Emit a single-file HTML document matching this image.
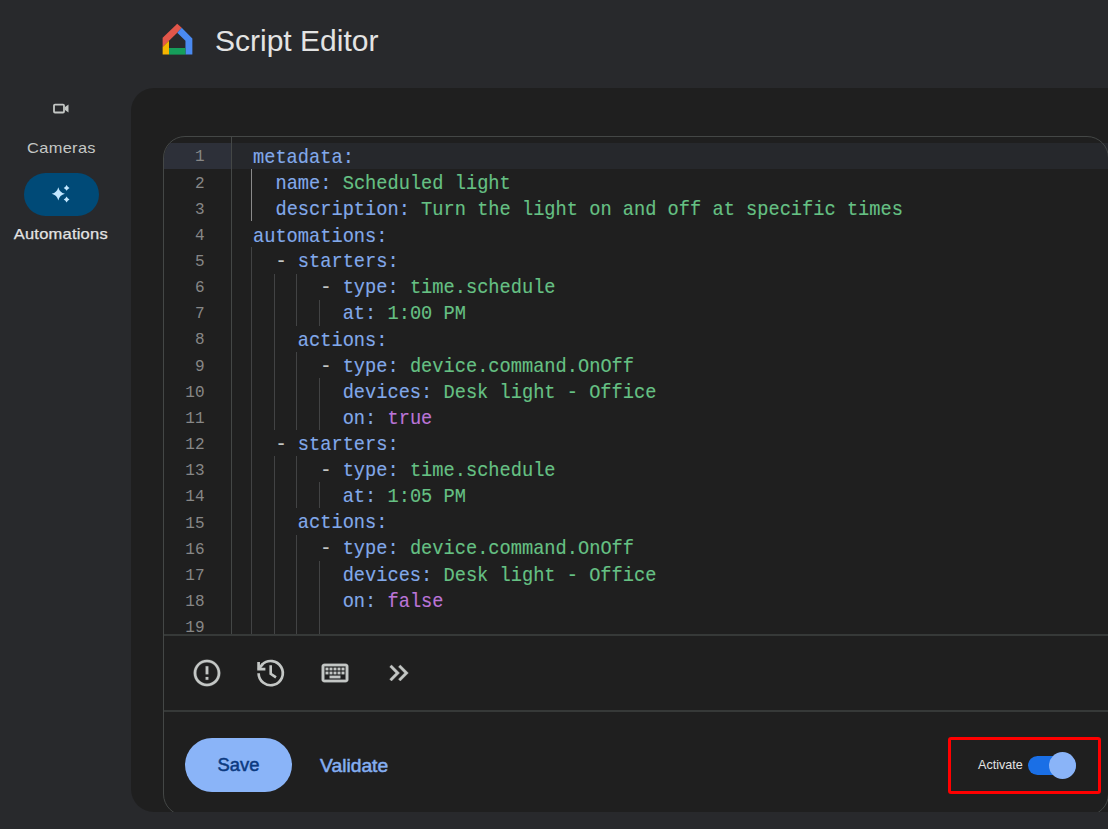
<!DOCTYPE html>
<html>
<head>
<meta charset="utf-8">
<style>
html,body{margin:0;padding:0;}
body{width:1108px;height:829px;overflow:hidden;background:#28292c;position:relative;font-family:"Liberation Sans",sans-serif;}
.abs{position:absolute;}
#title{left:215px;top:22.5px;font-size:30px;color:#e3e3e3;letter-spacing:0px;white-space:nowrap;line-height:36px;}
.navlbl{position:absolute;left:0;width:122px;text-align:center;font-size:14.5px;white-space:nowrap;}
#card,#card2{left:131px;top:88px;width:1100px;height:723.5px;background:#1f1f1f;border-radius:23px;overflow:hidden;}
#card2{background:transparent;}
.edbox{position:absolute;left:32px;top:48px;overflow:hidden;width:946px;height:680px;border:1px solid #444746;border-radius:22px;box-sizing:border-box;}
.code{font-family:"Liberation Mono",monospace;}
.gd{position:absolute;width:1px;background:#424344;}
.gd.hi{background:#8a8a8a;}
.k{color:#82a9ea;}
.v{color:#66c184;}
.b{color:#bb75d8;}
.d{color:#c4c7c5;}
</style>
</head>
<body>
<!-- Google Home logo -->
<svg class="abs" style="left:156px;top:18px" width="44" height="44" viewBox="0 0 829 829">
  <polygon fill="#e2564a" points="400,110 485,185 400,280 245,430 125,545 125,370"/>
  <polygon fill="#4a8af2" points="485,185 685,385 685,690 555,690 555,430 400,280"/>
  <polygon fill="#f4b400" points="125,545 245,430 245,690 125,690"/>
  <polygon fill="#169e5b" points="245,565 555,565 555,690 245,690"/>
</svg>
<div id="title" class="abs">Script Editor</div>

<!-- nav -->
<svg class="abs" style="left:45px;top:96px" width="32" height="24" viewBox="0 0 32 24">
  <rect x="9" y="8.6" width="10" height="7.9" rx="1" fill="none" stroke="#c4c7c5" stroke-width="1.8"/>
  <polygon points="20,11 23.5,8.4 23.5,16.5 20,14" fill="#c4c7c5"/>
</svg>
<div class="navlbl" style="top:140px;color:#c4c7c5;"><span style="display:inline-block;transform:scaleX(1.13);font-size:14.5px;letter-spacing:0.3px">Cameras</span></div>
<div class="abs" style="left:24px;top:173px;width:75px;height:43px;border-radius:22px;background:#004a77;"></div>
<div class="navlbl" style="top:224.5px;color:#e3e3e3;"><span style="display:inline-block;transform:scaleX(1.10);font-size:15px;letter-spacing:0.2px;-webkit-text-stroke:0.25px #e3e3e3">Automations</span></div>

<div id="card" class="abs">
  <div class="edbox" style="border-color:transparent"><div class="abs" style="left:0;top:6px;width:67px;height:26.1px;background:#2d3039;"></div></div>
</div>

<!-- editor content -->
<div class="abs" style="left:232px;top:143px;width:876px;height:26.1px;background:#26282c;"></div>


<div class="abs" style="left:231px;top:137px;width:1px;height:497.5px;background:#444746;"></div>
<div id="clip" class="abs" style="left:164px;top:137px;width:944px;height:497.5px;overflow:hidden;">
<div id="gutter" class="code" style="position:absolute;left:0;top:7.4px;width:40.5px;text-align:right;font-size:16px;line-height:26.15px;color:#878787;">
<div>1</div>
<div>2</div>
<div>3</div>
<div>4</div>
<div>5</div>
<div>6</div>
<div>7</div>
<div>8</div>
<div>9</div>
<div>10</div>
<div>11</div>
<div>12</div>
<div>13</div>
<div>14</div>
<div>15</div>
<div>16</div>
<div>17</div>
<div>18</div>
<div>19</div>
</div>
<div class="gd hi" style="left:87px;top:32.1px;height:52.2px"></div>
<div class="gd" style="left:87px;top:110.4px;height:387.1px"></div>
<div class="gd" style="left:110px;top:136.5px;height:156.6px"></div>
<div class="gd" style="left:110px;top:319.2px;height:178.3px"></div>
<div class="gd" style="left:132px;top:136.5px;height:52.2px"></div>
<div class="gd" style="left:132px;top:214.8px;height:78.3px"></div>
<div class="gd" style="left:132px;top:319.2px;height:52.2px"></div>
<div class="gd" style="left:132px;top:397.5px;height:100.0px"></div>
<div class="gd" style="left:155px;top:162.6px;height:26.1px"></div>
<div class="gd" style="left:155px;top:240.9px;height:52.2px"></div>
<div class="gd" style="left:155px;top:345.3px;height:26.1px"></div>
<div class="gd" style="left:155px;top:423.6px;height:73.9px"></div>
<div id="code" class="code" style="position:absolute;left:89px;top:7.6px;font-size:18.68px;line-height:24.857px;white-space:pre;transform:scaleY(1.05);transform-origin:0 0;-webkit-text-stroke:0.12px currentColor;"><div class="ln"><span class="k">metadata:</span></div><div class="ln">  <span class="k">name:</span> <span class="v">Scheduled light</span></div><div class="ln">  <span class="k">description:</span> <span class="v">Turn the light on and off at specific times</span></div><div class="ln"><span class="k">automations:</span></div><div class="ln">  <span class="d">- </span><span class="k">starters:</span></div><div class="ln">      <span class="d">- </span><span class="k">type:</span> <span class="v">time.schedule</span></div><div class="ln">        <span class="k">at:</span> <span class="v">1:00 PM</span></div><div class="ln">    <span class="k">actions:</span></div><div class="ln">      <span class="d">- </span><span class="k">type:</span> <span class="v">device.command.OnOff</span></div><div class="ln">        <span class="k">devices:</span> <span class="v">Desk light - Office</span></div><div class="ln">        <span class="k">on:</span> <span class="b">true</span></div><div class="ln">  <span class="d">- </span><span class="k">starters:</span></div><div class="ln">      <span class="d">- </span><span class="k">type:</span> <span class="v">time.schedule</span></div><div class="ln">        <span class="k">at:</span> <span class="v">1:05 PM</span></div><div class="ln">    <span class="k">actions:</span></div><div class="ln">      <span class="d">- </span><span class="k">type:</span> <span class="v">device.command.OnOff</span></div><div class="ln">        <span class="k">devices:</span> <span class="v">Desk light - Office</span></div><div class="ln">        <span class="k">on:</span> <span class="b">false</span></div><div class="ln"></div></div>
</div>
<div class="abs" style="left:164px;top:634px;width:944px;height:2px;background:#363938;"></div>
<div class="abs" style="left:164px;top:710px;width:944px;height:2px;background:#363938;"></div>

<!-- toolbar icons -->
<svg class="abs" style="left:190.9px;top:656.9px" width="32" height="32" viewBox="0 0 24 24"><path fill="#c4c7c5" stroke="#c4c7c5" stroke-width="0.15" d="M11 15h2v2h-2zm0-8h2v6h-2zm.99-5C6.47 2 2 6.48 2 12s4.47 10 9.99 10C17.52 22 22 17.52 22 12S17.52 2 11.99 2zM12 20c-4.42 0-8-3.58-8-8s3.58-8 8-8 8 3.58 8 8-3.58 8-8 8z"/></svg>
<svg class="abs" style="left:252px;top:655px" width="38" height="38" viewBox="252 655 38 38"><g fill="none" stroke="#c4c7c5" stroke-width="2.7"><path d="M258.6 673.2 A12.1 12.1 0 1 0 262.1 664.6"/><path d="M258.6 662 V669.2 H265.4" stroke-linejoin="miter"/><path d="M258.6 669.2 L262.6 664.2"/><path d="M270.7 665.2 V673.9 L276 677.3" stroke-width="2.6" stroke-linejoin="miter"/></g></svg>
<svg class="abs" style="left:318.7px;top:657px" width="32" height="32" viewBox="0 -960 960 960"><path fill="#c4c7c5" stroke="#c4c7c5" stroke-width="8" d="M160-200q-33 0-56.5-23.5T80-280v-400q0-33 23.5-56.5T160-760h640q33 0 56.5 23.5T880-680v400q0 33-23.5 56.5T800-200H160Zm0-80h640v-400H160v400Zm160-40h320v-80H320v80ZM200-440h80v-80h-80v80Zm120 0h80v-80h-80v80Zm120 0h80v-80h-80v80Zm120 0h80v-80h-80v80Zm120 0h80v-80h-80v80ZM200-560h80v-80h-80v80Zm120 0h80v-80h-80v80Zm120 0h80v-80h-80v80Zm120 0h80v-80h-80v80Zm120 0h80v-80h-80v80Z"/></svg>
<svg class="abs" style="left:382.5px;top:657px" width="32" height="32" viewBox="0 -960 960 960"><path fill="#c4c7c5" stroke="#c4c7c5" stroke-width="12" d="M383-480 200-664l56-56 240 240-240 240-56-56 183-184Zm264 0L464-664l56-56 240 240-240 240-56-56 183-184Z"/></svg>

<!-- footer -->
<div class="abs" style="left:185px;top:738px;width:107px;height:53.5px;border-radius:27px;background:#8ab4f8;"></div>
<div class="abs" style="left:185.5px;top:739px;width:107px;height:53.5px;line-height:53.5px;text-align:center;font-size:18px;color:#0c3a80;-webkit-text-stroke:0.5px #0c3a80;"><span style="display:inline-block;transform:scaleX(1.02)">Save</span></div>
<div class="abs" style="left:320px;top:753px;font-size:18px;color:#84aef2;line-height:26px;white-space:nowrap;-webkit-text-stroke:0.5px #84aef2;transform-origin:0 0;transform:scaleX(1.07)">Validate</div>

<div class="abs" style="left:948px;top:737px;width:153px;height:57px;border:3px solid #ff0000;border-radius:3px;box-sizing:border-box;"></div>
<div class="abs" style="left:978px;top:756.7px;font-size:12.6px;color:#e3e3e3;line-height:16px;white-space:nowrap;">Activate</div>
<div class="abs" style="left:1028px;top:756px;width:48px;height:19px;border-radius:10px;background:#1a6fe6;"></div>
<div class="abs" style="left:1049px;top:751.5px;width:27px;height:27px;border-radius:50%;background:#8ab4f8;"></div>

<!-- sparkle -->
<svg class="abs" style="left:44px;top:180px" width="32" height="28" viewBox="0 0 32 28">
  <path fill="#c2e7ff" d="M14.30 7.20 Q15.60 12.50 20.90 13.80 Q15.60 15.10 14.30 20.40 Q13.00 15.10 7.70 13.80 Q13.00 12.50 14.30 7.20Z M22.60 5.00 Q23.50 7.00 25.50 7.90 Q23.50 8.80 22.60 10.80 Q21.70 8.80 19.70 7.90 Q21.70 7.00 22.60 5.00Z M22.60 16.60 Q23.50 18.60 25.50 19.50 Q23.50 20.40 22.60 22.40 Q21.70 20.40 19.70 19.50 Q21.70 18.60 22.60 16.60Z"/>
</svg>
<div id="card2" class="abs"><div class="edbox"></div></div>
</body>
</html>
